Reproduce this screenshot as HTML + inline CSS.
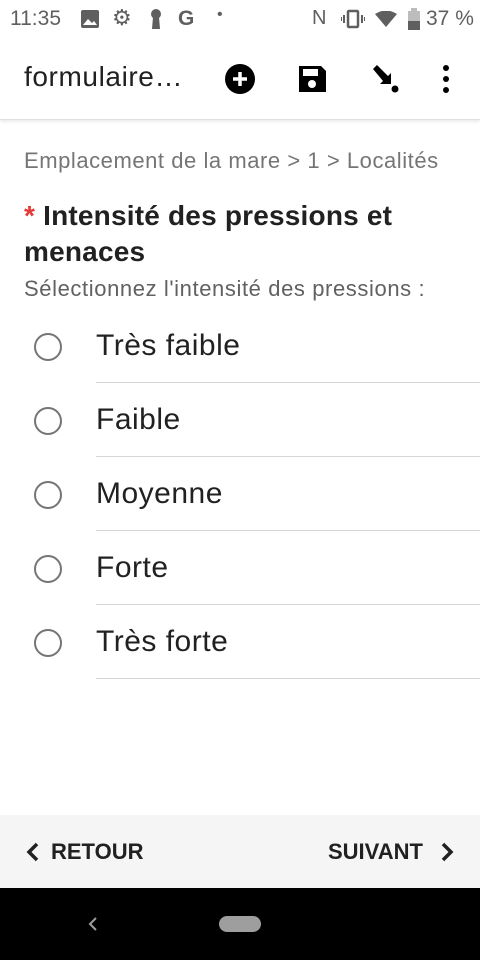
<!DOCTYPE html>
<html><head><meta charset="utf-8"><style>
*{margin:0;padding:0;box-sizing:border-box}
body{width:480px;height:960px;position:relative;background:#fff;font-family:"Liberation Sans",sans-serif;overflow:hidden;color:#212121}
.abs{position:absolute;white-space:nowrap}
.sb{top:0;left:0;width:480px;height:40px;color:#5f5f5f;font-size:21px}
.tb{top:40px;left:0;width:480px;height:80px;border-bottom:1px solid #e0e0e0;box-shadow:0 2px 3px rgba(0,0,0,.08)}
.radio{left:34px;width:28px;height:28px;border:2.5px solid #757575;border-radius:50%}
.opt{left:96px;font-size:30px;color:#212121;letter-spacing:0.5px}
.div{left:96px;width:384px;height:1px;background:#d6d6d6}
</style></head><body>
<div class="abs sb">
 <div class="abs" style="left:10px;top:7px">11:35</div>
 <svg class="abs" style="left:80px;top:9px" width="20" height="20" viewBox="0 0 20 20"><rect x="1" y="1" width="18" height="18" rx="2" fill="#5f5f5f"/><path d="M3 16l5-6 4 4 2-2 3 4z" fill="#fff"/></svg>
 <div class="abs" style="left:112px;top:5px;font-size:22px">⚙</div>
 <svg class="abs" style="left:148px;top:8px" width="16" height="22" viewBox="0 0 16 22"><circle cx="8" cy="6" r="5" fill="#5f5f5f"/><path d="M5 9h6l1 12H4z" fill="#5f5f5f"/></svg>
 <div class="abs" style="left:178px;top:7px;font-size:21px;font-weight:bold">G</div>
 <div class="abs" style="left:217px;top:6px;font-size:16px">•</div>
 <div class="abs" style="left:312px;top:7px;font-size:20px">N</div>
 <svg class="abs" style="left:341px;top:9px" width="24" height="20" viewBox="0 0 24 20"><rect x="7" y="2" width="10" height="16" rx="1" fill="none" stroke="#5f5f5f" stroke-width="2.5"/><path d="M3 6v8M21 6v8M0 8v4M24 8v4" stroke="#5f5f5f" stroke-width="2"/></svg>
 <svg class="abs" style="left:375px;top:11px" width="22" height="16" viewBox="0 0 22 16"><path d="M0 3Q11-4 22 3L11 16z" fill="#5f5f5f"/></svg>
 <svg class="abs" style="left:408px;top:8px" width="12" height="22" viewBox="0 0 12 22"><rect x="0" y="3" width="12" height="19" fill="#bdbdbd"/><rect x="0" y="13" width="12" height="9" fill="#5f5f5f"/><rect x="3" y="0" width="6" height="3" fill="#bdbdbd"/></svg>
 <div class="abs" style="left:426px;top:7px">37 %</div>
</div>
<div class="abs tb">
 <div class="abs" style="left:24px;top:21px;font-size:28px;letter-spacing:0.6px;color:#212121">formulaire…</div>
 <svg class="abs" style="left:224px;top:23px" width="32" height="32" viewBox="0 0 32 32"><circle cx="16" cy="16" r="15" fill="#000"/><path d="M16 9v14M9 16h14" stroke="#fff" stroke-width="3.5"/></svg>
 <svg class="abs" style="left:297px;top:24px" width="30" height="30" viewBox="0 0 30 30"><path d="M2 2h22l5 5v21H2z" fill="#000"/><rect x="6" y="5" width="15" height="7" fill="#fff"/><circle cx="15" cy="20" r="4" fill="#fff"/></svg>
 <svg class="abs" style="left:370px;top:23px" width="32" height="32" viewBox="0 0 32 32"><path d="M3 6l4-4 11 11 3-3v11H10l3-3z" fill="#000"/><circle cx="25" cy="26" r="3.5" fill="#000"/></svg>
 <svg class="abs" style="left:440px;top:24px" width="12" height="30" viewBox="0 0 12 30"><circle cx="6" cy="4" r="3" fill="#000"/><circle cx="6" cy="15" r="3" fill="#000"/><circle cx="6" cy="26" r="3" fill="#000"/></svg>
</div>
<div class="abs" style="left:24px;top:148px;font-size:22px;letter-spacing:0.55px;color:#757575">Emplacement de la mare &gt; 1 &gt; Localités</div>
<div class="abs" style="left:24px;top:198px;font-size:28px;letter-spacing:0.2px;font-weight:bold;line-height:36px;width:450px;white-space:normal"><span style="color:#e53935">*</span> Intensité des pressions et menaces</div>
<div class="abs" style="left:24px;top:276px;font-size:22px;letter-spacing:0.6px;color:#616161">Sélectionnez l'intensité des pressions :</div>
<div class="abs radio" style="top:333px"></div><div class="abs opt" style="top:329px">Très faible</div><div class="abs div" style="top:382px"></div>
<div class="abs radio" style="top:407px"></div><div class="abs opt" style="top:403px">Faible</div><div class="abs div" style="top:456px"></div>
<div class="abs radio" style="top:481px"></div><div class="abs opt" style="top:477px">Moyenne</div><div class="abs div" style="top:530px"></div>
<div class="abs radio" style="top:555px"></div><div class="abs opt" style="top:551px">Forte</div><div class="abs div" style="top:604px"></div>
<div class="abs radio" style="top:629px"></div><div class="abs opt" style="top:625px">Très forte</div><div class="abs div" style="top:678px"></div>
<div class="abs" style="left:0;top:815px;width:480px;height:73px;background:#f5f5f5">
 <svg class="abs" style="left:26px;top:27px" width="14" height="20" viewBox="0 0 14 20"><path d="M11 2L3 10l8 8" fill="none" stroke="#212121" stroke-width="3.5"/></svg>
 <div class="abs" style="left:51px;top:24px;font-size:22px;font-weight:bold;color:#212121">RETOUR</div>
 <div class="abs" style="left:328px;top:24px;font-size:22px;font-weight:bold;color:#212121">SUIVANT</div>
 <svg class="abs" style="left:440px;top:27px" width="14" height="20" viewBox="0 0 14 20"><path d="M3 2l8 8-8 8" fill="none" stroke="#212121" stroke-width="3.5"/></svg>
</div>
<div class="abs" style="left:0;top:888px;width:480px;height:72px;background:#000">
 <svg class="abs" style="left:87px;top:28px" width="12" height="16" viewBox="0 0 12 16"><path d="M9 2L3 8l6 6" fill="none" stroke="#9e9e9e" stroke-width="2"/></svg>
 <div class="abs" style="left:219px;top:28px;width:42px;height:16px;border-radius:8px;background:#9e9e9e"></div>
</div>
</body></html>
